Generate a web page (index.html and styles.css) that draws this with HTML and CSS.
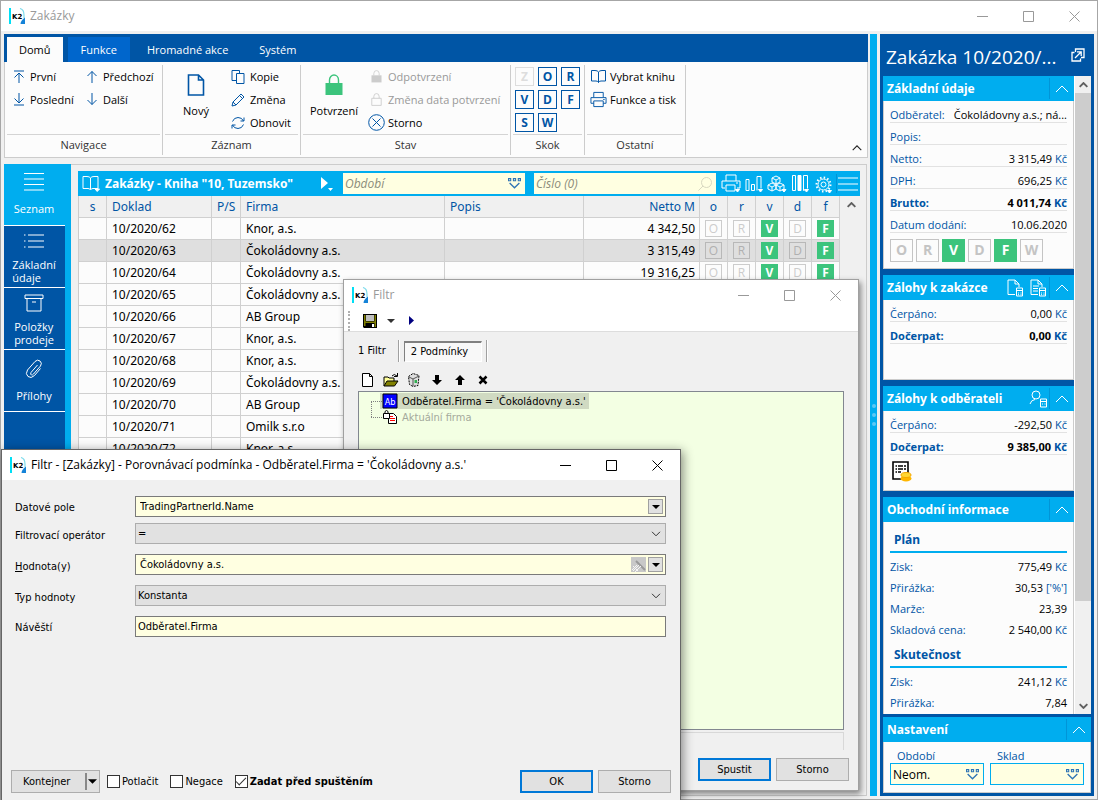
FILE: index.html
```html
<!DOCTYPE html>
<html lang="cs">
<head>
<meta charset="utf-8">
<title>Zakázky</title>
<link rel="stylesheet" href="styles.css">
</head>
<body>
<svg class="defs" aria-hidden="true">
  <symbol id="logo" viewBox="0 0 17 17"><path d="M0 0h2v16H0z" fill="#00dff5"/><path d="M11 .5q4 1 4 6.500v3" fill="none" stroke="#7fdcec" stroke-width="1.200"/><path d="M16 9.500v6.500h-4.500q0-3.500 4.500-6.500z" fill="#1583d8"/><text x="3" y="10.500" class="logotext">K2</text></symbol>
  <symbol id="min" viewBox="0 0 11 11"><path d="M0 5.500h11"/></symbol>
  <symbol id="max" viewBox="0 0 11 11"><path d="M.5.5h10v10H.5z"/></symbol>
  <symbol id="close" viewBox="0 0 11 11"><path d="M.5.5l10 10M10.500.5l-10 10"/></symbol>
  <symbol id="up" viewBox="0 0 12 13"><path d="M6 13V1.500M1.500 6L6 1.500 10.500 6"/></symbol>
  <symbol id="down" viewBox="0 0 12 13"><path d="M6 0v11.500M1.500 7L6 11.500 10.500 7"/></symbol>
  <symbol id="first" viewBox="0 0 12 13"><path d="M1 1h10M6 13V3M1.500 7.500L6 3l4.500 4.500"/></symbol>
  <symbol id="last" viewBox="0 0 12 13"><path d="M1 12h10M6 0v10M1.500 5.500L6 10l4.500-4.500"/></symbol>
  <symbol id="page" viewBox="0 0 17 22"><path d="M1 1h10l5 5v15H1zM11 1v5h5" stroke-width="1.600"/></symbol>
  <symbol id="copy" viewBox="0 0 14 14"><path d="M5.500 3.500h7.500v10H5.500zM5 10.500H1V.5h7.500v3"/></symbol>
  <symbol id="pencil" viewBox="0 0 14 14"><path d="M1 13l1-4L10 1l3 3-8 8zM8.500 2.500l3 3M2 9l3 3"/></symbol>
  <symbol id="refresh" viewBox="0 0 14 14"><path d="M1.500 5.500q1.500-4 5.500-4t5.500 3.500M13 1.500V5H9.500M12.500 8.500q-1.500 4-5.500 4t-5.500-3.500M1 12.500V9h3.500"/></symbol>
  <symbol id="lock" viewBox="0 0 18 22"><path d="M4.500 9V6a4.500 5 0 0 1 9 0v3" fill="none" stroke="currentColor" stroke-width="1.400"/><path d="M.5 9h17v12H.5z" fill="currentColor" stroke="none"/></symbol>
  <symbol id="lock-o" viewBox="0 0 18 22"><path d="M4.500 9V6a4.500 5 0 0 1 9 0v3M1 9h16v12H1z" stroke-width="1.500"/></symbol>
  <symbol id="cancel" viewBox="0 0 17 17"><circle cx="8.500" cy="8.500" r="7.800"/><path d="M4.500 4.500l8 8M12.500 4.500l-8 8"/></symbol>
  <symbol id="book" viewBox="0 0 17 14"><path d="M8.500 2.500Q7.500 1 5 1H1.500v10.500H6q2 0 2.500 1.500.5-1.500 2.500-1.500h4.500V1H12Q9.500 1 8.500 2.500zM8.500 2.500V13"/></symbol>
  <symbol id="printer" viewBox="0 0 18 17"><path d="M4 6V1h10v5M4 12.500H1V6.500h16v6h-3M4 10h10v6H4zM14 8.500h1.500"/></symbol>
  <symbol id="chevron" viewBox="0 0 14 8"><path d="M1 7l6-6 6 6"/></symbol>
  <symbol id="vdown" viewBox="0 0 10 6"><path d="M1 .8l4 4 4-4"/></symbol>
  <symbol id="drop" viewBox="0 0 12 10"><path d="M.5 .5h2v2h-2zM5 .5h2v2H5zM9.500 .5h2v2h-2z"/><path d="M1.500 4.500L6 9l4.500-4.500" stroke-width="1.200"/></symbol>
  <symbol id="lines" viewBox="0 0 20 18"><path d="M0 .5h20M0 6h20M0 11.500h20M0 17h20"/></symbol>
  <symbol id="list" viewBox="0 0 20 14"><path d="M0 1h1.500M4 1h16M0 7h1.500M4 7h16M0 13h1.500M4 13h16"/></symbol>
  <symbol id="box" viewBox="0 0 20 18"><path d="M1 1h18v3.500H1zM3 4.500V17h14V4.500M8 8h4"/></symbol>
  <symbol id="clip" viewBox="0 0 18 20"><path d="M12.500 6L6 13.500q-1 2 .5 2.500 1 .3 2-1L15.500 7q2-3-.5-5t-5 .5L2.500 11q-2.500 4 .5 6.500t6.500-1L15.500 9.500"/></symbol>
  <symbol id="gear" viewBox="0 0 17 17"><circle cx="8.500" cy="8.500" r="5.500"/><circle cx="8.500" cy="8.500" r="2.500"/><circle cx="8.500" cy="8.500" r="7" stroke-dasharray="1.500 2.160" stroke-width="2"/></symbol>
  <symbol id="doccalc" viewBox="0 0 17 18"><path d="M8 15.500H1V1h7l4 4v3M8 1v4h4M9.500 9h6v8h-6zM9.500 11.500h6M11 14h1M13.500 14h1M11 15.700h1M13.500 15.700h1"/></symbol>
  <symbol id="tri" viewBox="0 0 8 4"><path d="M0 0h8L4 4z" fill="currentColor" stroke="none"/></symbol>
</svg>

<div class="window">
  <header class="titlebar inactive">
    <svg class="logo"><use href="#logo"/></svg><span class="caption">Zakázky</span>
    <div class="winbtns">
      <button aria-label="Minimalizovat"><svg><use href="#min"/></svg></button><button aria-label="Maximalizovat"><svg><use href="#max"/></svg></button><button aria-label="Zavřít"><svg><use href="#close"/></svg></button>
    </div>
  </header>

  <div class="shell">
    <div class="left">
      <nav class="tabs"><button class="active">Domů</button><button class="hover">Funkce</button><button>Hromadné akce</button><button>Systém</button></nav>
      <section class="ribbon">
        <div class="group g-nav">
          <div class="tools"><div class="stack w-nav">
            <button class="cmd"><svg class="i12"><use href="#first"/></svg>První</button>
            <button class="cmd"><svg class="i12"><use href="#last"/></svg>Poslední</button></div>
            <div class="stack">
            <button class="cmd"><svg class="i12"><use href="#up"/></svg>Předchozí</button>
            <button class="cmd"><svg class="i12"><use href="#down"/></svg>Další</button></div>
          </div><div class="gname">Navigace</div>
        </div>
        <div class="group g-rec">
          <div class="tools"><button class="big"><svg><use href="#page"/></svg>Nový</button>
            <div class="stack">
            <button class="cmd"><svg class="i14"><use href="#copy"/></svg>Kopie</button>
            <button class="cmd"><svg class="i14"><use href="#pencil"/></svg>Změna</button>
            <button class="cmd"><svg class="i14"><use href="#refresh"/></svg>Obnovit</button></div>
          </div><div class="gname">Záznam</div>
        </div>
        <div class="group g-state">
          <div class="tools"><button class="big green"><svg><use href="#lock"/></svg>Potvrzení</button>
            <div class="stack">
            <button class="cmd off" disabled><svg class="i17 small"><use href="#lock"/></svg>Odpotvrzení</button>
            <button class="cmd off" disabled><svg class="i17 small"><use href="#lock-o"/></svg>Změna data potvrzení</button>
            <button class="cmd"><svg class="i17"><use href="#cancel"/></svg>Storno</button></div>
          </div><div class="gname">Stav</div>
        </div>
        <div class="group g-jump">
          <div class="tools jump"><button disabled>Z</button><button>O</button><button>R</button><button>V</button><button>D</button><button>F</button><button>S</button><button>W</button></div>
          <div class="gname">Skok</div>
        </div>
        <div class="group g-other">
          <div class="tools"><div class="stack">
            <button class="cmd"><svg class="i17"><use href="#book"/></svg>Vybrat knihu</button>
            <button class="cmd"><svg class="i17"><use href="#printer"/></svg>Funkce a tisk</button></div>
          </div><div class="gname">Ostatní</div>
        </div>
        <button class="collapse" aria-label="Sbalit"><svg><use href="#chevron"/></svg></button>
      </section>

      <div class="work">
        <nav class="side">
          <button class="active"><svg><use href="#lines"/></svg><span>Seznam</span></button>
          <button><svg><use href="#list"/></svg><span>Základní<br>údaje</span></button>
          <button><svg><use href="#box"/></svg><span>Položky<br>prodeje</span></button>
          <button class="attach"><svg><use href="#clip"/></svg><span>Přílohy</span></button>
        </nav>
        <main class="content">
          <div class="gridbar">
            <button aria-label="Kniha"><svg class="i-book" viewBox="0 0 18 17"><path d="M8.500 3Q7.500 1.500 5 1.500H1v12h5q2 0 2.500 1.500.5-1.500 2.500-1.500h5v-12h-4Q9.500 1.500 8.500 3zM8.500 3v11"/><path d="M13 14h4.500L15.200 16.500z" fill="#fff"/></svg></button>
            <h1>Zakázky - Kniha "10, Tuzemsko"</h1>
            <button aria-label="Spustit"><svg class="i-play" viewBox="0 0 14 14"><path d="M1 0l7 6-7 6zM8 11h5l-2.500 3z" fill="#fff" stroke="none"/></svg></button>
            <div class="search"><input aria-label="Období" placeholder="Období"><svg class="drop"><use href="#drop"/></svg></div>
            <div class="search"><input aria-label="Číslo" placeholder="Číslo (0)"><svg class="lens" viewBox="0 0 14 14"><circle cx="8.500" cy="5.500" r="5"/><path d="M5 9l-4.500 4.500"/></svg></div>
            <div class="icons">
              <button aria-label="Tisk"><svg viewBox="0 0 20 19"><path d="M5 7V1h10v6M4 14H1V7h18v7h-3M5 11h9v6H5zM15 9h2"/><path d="M14.500 15.500h4L16.500 18z" fill="#fff"/></svg></button>
              <button aria-label="Graf"><svg viewBox="0 0 20 19"><path d="M2 5.500h3v11H2zM7.500 10.500h3v6h-3zM13 2.500h4v12"/><path d="M13 2.500v14"/><path d="M14.500 15.500h4L16.500 18z" fill="#fff"/></svg></button>
              <button aria-label="Analýza"><svg viewBox="0 0 20 19"><path d="M9 2l4 2v4L9 10 5 8V4zM5 4l4 2 4-2M9 6v4M5 9l4 2v4l-4 2-4-2v-4zM1 11l4 2 4-2M5 13v4M13 9l4 2v4l-4 2-4-2v-4zM9 11l4 2 4-2M13 13v4"/><path d="M15 15.500h4L17 18z" fill="#fff"/></svg></button>
              <button aria-label="Sloupce"><svg viewBox="0 0 20 19"><path d="M2.500 1.500h3v15h-3zM13.500 1.500h4v13M13.500 1.500v15h1"/><path d="M8 1.500h3v15H8z" fill="#fff"/><path d="M14.500 15.500h4L16.500 18z" fill="#fff"/></svg></button>
              <button aria-label="Nastavení"><svg class="gear" viewBox="0 0 17 17"><use href="#gear"/><path d="M12.500 14.500h4L14.500 17z" fill="#fff"/></svg></button>
              <button class="menu" aria-label="Nabídka"><svg viewBox="0 0 20 18"><path d="M0 3.500h20M0 9.500h20M0 15.500h20"/></svg></button>
            </div>
          </div>
          <div class="gridwrap">
          <table class="grid">
            <colgroup><col class="c28"><col class="c105"><col class="c29"><col class="c204"><col><col class="c116"><col class="c28"><col class="c28"><col class="c28"><col class="c28"><col class="c28"></colgroup>
            <thead><tr><th class="mid">s</th><th>Doklad</th><th>P/S</th><th>Firma</th><th>Popis</th><th class="num">Netto M</th><th class="mid">o</th><th class="mid">r</th><th class="mid">v</th><th class="mid">d</th><th class="mid">f</th></tr></thead>
            <tbody>
            <tr><td></td><td>10/2020/62</td><td></td><td>Knor, a.s.</td><td></td><td class="num">4 342,50</td><td class="mid"><i>O</i></td><td class="mid"><i>R</i></td><td class="mid"><i class="on">V</i></td><td class="mid"><i>D</i></td><td class="mid"><i class="on">F</i></td></tr>
            <tr class="sel"><td></td><td>10/2020/63</td><td></td><td>Čokoládovny a.s.</td><td></td><td class="num">3 315,49</td><td class="mid"><i>O</i></td><td class="mid"><i>R</i></td><td class="mid"><i class="on">V</i></td><td class="mid"><i>D</i></td><td class="mid"><i class="on">F</i></td></tr>
            <tr><td></td><td>10/2020/64</td><td></td><td>Čokoládovny a.s.</td><td></td><td class="num">19 316,25</td><td class="mid"><i>O</i></td><td class="mid"><i>R</i></td><td class="mid"><i class="on">V</i></td><td class="mid"><i>D</i></td><td class="mid"><i class="on">F</i></td></tr>
            <tr><td></td><td>10/2020/65</td><td></td><td>Čokoládovny a.s.</td><td></td><td></td><td></td><td></td><td></td><td></td><td></td></tr>
            <tr><td></td><td>10/2020/66</td><td></td><td>AB Group</td><td></td><td></td><td></td><td></td><td></td><td></td><td></td></tr>
            <tr><td></td><td>10/2020/67</td><td></td><td>Knor, a.s.</td><td></td><td></td><td></td><td></td><td></td><td></td><td></td></tr>
            <tr><td></td><td>10/2020/68</td><td></td><td>Knor, a.s.</td><td></td><td></td><td></td><td></td><td></td><td></td><td></td></tr>
            <tr><td></td><td>10/2020/69</td><td></td><td>Čokoládovny a.s.</td><td></td><td></td><td></td><td></td><td></td><td></td><td></td></tr>
            <tr><td></td><td>10/2020/70</td><td></td><td>AB Group</td><td></td><td></td><td></td><td></td><td></td><td></td><td></td></tr>
            <tr><td></td><td>10/2020/71</td><td></td><td>Omilk s.r.o</td><td></td><td></td><td></td><td></td><td></td><td></td><td></td></tr>
            <tr><td></td><td>10/2020/72</td><td></td><td>Knor, a.s.</td><td></td><td></td><td></td><td></td><td></td><td></td><td></td></tr>
            </tbody>
          </table>
          <div class="gridscroll"><svg class="arrow"><use href="#chevron"/></svg></div>
          </div>
        </main>
      </div>
    </div>

    <div class="splitter"><span></span><span></span><span></span></div>

    <aside class="panel">
      <div class="ptitle"><h2>Zakázka 10/2020/...</h2><button aria-label="Otevřít v okně"><svg viewBox="0 0 14 14"><path d="M4.500 4V1h8.500v8.500h-3M3.500 4.500H1V13h8.500v-2.500M4 10l6-6M6 3.800h4.200V8" stroke-width="1.300"/></svg></button></div>
      <div class="pscroll">
        <div class="cards">
          <section class="card">
            <h3>Základní údaje<button class="tog" aria-label="Sbalit"><svg><use href="#chevron"/></svg></button></h3>
            <div class="cbody lined">
              <dl><dt>Odběratel:</dt><dd>Čokoládovny a.s.; ná...</dd></dl>
              <dl><dt>Popis:</dt><dd></dd></dl>
              <dl><dt>Netto:</dt><dd>3 315,49 <u>Kč</u></dd></dl>
              <dl><dt>DPH:</dt><dd>696,25 <u>Kč</u></dd></dl>
              <dl class="b"><dt>Brutto:</dt><dd>4 011,74 <u>Kč</u></dd></dl>
              <dl><dt>Datum dodání:</dt><dd>10.06.2020</dd></dl>
              <div class="badges"><i>O</i><i>R</i><i class="on">V</i><i>D</i><i class="on">F</i><i>W</i></div>
            </div>
          </section>
          <section class="card">
            <h3>Zálohy k zakázce<button class="act" aria-label="Nová záloha"><svg><use href="#doccalc"/></svg></button><button class="act" aria-label="Záloha"><svg viewBox="0 0 17 18"><use href="#doccalc"/><path d="M3 7h6M3 9.500h5M3 12h5"/></svg></button><button class="tog" aria-label="Sbalit"><svg><use href="#chevron"/></svg></button></h3>
            <div class="cbody lined h80">
              <dl><dt>Čerpáno:</dt><dd>0,00 <u>Kč</u></dd></dl>
              <dl class="b"><dt>Dočerpat:</dt><dd>0,00 <u>Kč</u></dd></dl>
            </div>
          </section>
          <section class="card">
            <h3>Zálohy k odběrateli<button class="act" aria-label="Odběratel"><svg viewBox="0 0 17 18"><circle cx="6" cy="5" r="4"/><path d="M0 14q1-4 5-4.500M10.500 9h6v8h-6zM10.500 11.500h6M12 14h1M14.500 14h1"/></svg></button><button class="tog" aria-label="Sbalit"><svg><use href="#chevron"/></svg></button></h3>
            <div class="cbody lined h80">
              <dl><dt>Čerpáno:</dt><dd>-292,50 <u>Kč</u></dd></dl>
              <dl class="b"><dt>Dočerpat:</dt><dd>9 385,00 <u>Kč</u></dd></dl>
              <svg class="coins" viewBox="0 0 20 21"><path d="M1 1h15v17H1z" fill="#fff" stroke="#000" stroke-width="1.600"/><path d="M3.500 5h1.500M6 5h5M12 5h2M3.500 8h1.500M6 8h5M12 8h2M3.500 11h1.500M6 11h3" stroke="#000" stroke-width="1.300"/><ellipse cx="14" cy="17.500" rx="5.500" ry="3" fill="#ffb600"/><ellipse cx="14" cy="14" rx="5" ry="2.500" fill="#ffd633" stroke="#f5a800"/></svg>
            </div>
          </section>
          <section class="card last">
            <h3>Obchodní informace<button class="tog" aria-label="Sbalit"><svg><use href="#chevron"/></svg></button></h3>
            <div class="cbody plain">
              <h4>Plán</h4>
              <dl><dt>Zisk:</dt><dd>775,49 <u>Kč</u></dd></dl>
              <dl><dt>Přirážka:</dt><dd>30,53 <u>['%']</u></dd></dl>
              <dl><dt>Marže:</dt><dd>23,39</dd></dl>
              <dl><dt>Skladová cena:</dt><dd>2 540,00 <u>Kč</u></dd></dl>
              <h4>Skutečnost</h4>
              <dl><dt>Zisk:</dt><dd>241,12 <u>Kč</u></dd></dl>
              <dl><dt>Přirážka:</dt><dd>7,84</dd></dl>
            </div>
          </section>
        </div>
        <div class="scrollbar"><svg class="arrow"><use href="#chevron"/></svg><span class="thumb"></span><svg class="arrow dn"><use href="#chevron"/></svg></div>
      </div>
      <section class="card settings">
        <h3>Nastavení<button class="tog" aria-label="Sbalit"><svg><use href="#chevron"/></svg></button></h3>
        <div class="cbody fields">
          <label><span>Období</span><span class="pick"><input value="Neom."><svg class="drop"><use href="#drop"/></svg></span></label>
          <label><span>Sklad</span><span class="pick"><input><svg class="drop"><use href="#drop"/></svg></span></label>
        </div>
      </section>
    </aside>
  </div>
</div>

<section class="dialog filter">
  <header class="titlebar inactive">
    <svg class="logo"><use href="#logo"/></svg><span class="caption">Filtr</span>
    <div class="winbtns">
      <button aria-label="Minimalizovat"><svg><use href="#min"/></svg></button><button aria-label="Maximalizovat"><svg><use href="#max"/></svg></button><button aria-label="Zavřít"><svg><use href="#close"/></svg></button>
    </div>
  </header>
  <div class="ftools">
    <span class="grip"></span>
    <button aria-label="Uložit"><svg class="save" viewBox="0 0 14 14"><path d="M0 0h14v14H1l-1-1z" fill="#000"/><path d="M1 1h1.500v11H1zM11.500 1H13v12h-1.500zM2.500 7.500h9V9h-9z" fill="#808000"/><path d="M3 1h8v6H3z" fill="#c0c0c0"/><path d="M9 10h2v3H9z" fill="#fff"/></svg></button>
    <button aria-label="Možnosti uložení"><svg class="tri"><use href="#tri"/></svg></button>
    <button aria-label="Spustit filtr"><svg class="run" viewBox="0 0 5 9"><path d="M0 0l5 4.500L0 9z" fill="#000080"/></svg></button>
  </div>
  <div class="ftabs"><button>1 Filtr</button><span class="vbar"></span><button class="down">2 Podmínky</button><span class="vbar"></span></div>
  <div class="factions">
    <button aria-label="Nový"><svg viewBox="0 0 16 14"><path d="M2.500.5h7l3 3v10h-10zM9.500.5v3h3" fill="#fff" stroke="#000"/></svg></button>
    <button aria-label="Otevřít"><svg viewBox="0 0 16 14"><path d="M1 13V4h4l1 1h5v3" fill="#ffff99" stroke="#000"/><path d="M1 13l3-5h11l-3.500 5z" fill="#808000" stroke="#000"/><path d="M9 3q2-3 5 0M14.500 0v3.500H11" fill="none" stroke="#000"/></svg></button>
    <button aria-label="Smazat"><svg viewBox="0 0 16 14"><path d="M2.500 3.500L7 .5l6 2-1 10-5 1-3.500-2z" fill="#ddd" stroke="#000" stroke-dasharray="2 1"/><path d="M3 4l4 2 6-3M7 6v7" stroke="#555" fill="none"/><path d="M8.500 7h2.500v3H8.500z" fill="#30b050"/></svg></button>
    <button aria-label="Dolů"><svg viewBox="0 0 16 14"><path d="M6 2h4v5h3l-5 5-5-5h3z" fill="#000"/></svg></button>
    <button aria-label="Nahoru"><svg viewBox="0 0 16 14"><path d="M6 12h4V7h3L8 2 3 7h3z" fill="#000"/></svg></button>
    <button aria-label="Odebrat"><svg viewBox="0 0 16 14"><path d="M4.500 3.500l7 7M11.500 3.500l-7 7" stroke="#000" stroke-width="2.500"/></svg></button>
  </div>
  <ul class="tree">
    <li class="picked"><svg class="node" viewBox="0 0 14 14"><path d="M0 0h14v14H0z" fill="#0000ff" stroke="#000"/><text x="7" y="10.500" text-anchor="middle" class="nodetext">Ab</text></svg><span>Odběratel.Firma = 'Čokoládovny a.s.'</span></li>
    <li class="dim"><svg class="node" viewBox="0 0 14 14"><path d="M5.500 3.500h5l3 3v7h-8z" fill="#fff" stroke="#000"/><path d="M7 6.500h3M7 8.500h5M7 10.500h5" stroke="#f00"/><path d="M.5 3.500h6v5h-6zM2 3.500V1.500l1.500-1 1.500 1v2" fill="#fff" stroke="#000"/></svg><span>Aktuální firma</span></li>
  </ul>
  <div class="status"></div>
  <footer class="fbtns"><button class="btn primary">Spustit</button><button class="btn">Storno</button></footer>
</section>

<section class="dialog cond">
  <header class="titlebar">
    <svg class="logo"><use href="#logo"/></svg><span class="caption">Filtr - [Zakázky] - Porovnávací podmínka - Odběratel.Firma = 'Čokoládovny a.s.'</span>
    <div class="winbtns">
      <button aria-label="Minimalizovat"><svg><use href="#min"/></svg></button><button aria-label="Maximalizovat"><svg><use href="#max"/></svg></button><button aria-label="Zavřít"><svg><use href="#close"/></svg></button>
    </div>
  </header>
  <form class="form">
    <div class="row"><label for="f1">Datové pole</label><div class="box"><input id="f1" value="TradingPartnerId.Name"><button type="button" aria-label="Vybrat pole"><svg class="tri"><use href="#tri"/></svg></button></div></div>
    <div class="row low tight"><label for="f2">Filtrovací operátor</label><div class="box gray"><select id="f2"><option>=</option></select><svg class="vd"><use href="#vdown"/></svg></div></div>
    <div class="row low"><label for="f3"><span class="key">H</span>odnota(y)</label><div class="box"><input id="f3" value="Čokoládovny a.s."><button type="button" class="tool" aria-label="Upravit" disabled><svg viewBox="0 0 15 15"><path d="M5 4l9 9" stroke="#999" stroke-width="2"/><path d="M1 13l5-5M2 14l6-6M4 15l6-6M2 9l5 5" stroke="#f5f5f5"/></svg></button><button type="button" aria-label="Vybrat hodnotu"><svg class="tri"><use href="#tri"/></svg></button></div></div>
    <div class="row low"><label for="f4">Typ hodnoty</label><div class="box gray"><select id="f4"><option>Konstanta</option></select><svg class="vd"><use href="#vdown"/></svg></div></div>
    <div class="row"><label for="f5">Návěští</label><div class="box text"><input id="f5" value="Odběratel.Firma"></div></div>
  </form>
  <footer class="cbtns">
    <button class="btn split"><span>Kontejner</span><svg class="tri"><use href="#tri"/></svg></button>
    <label class="chk"><input type="checkbox">Potlačit</label>
    <label class="chk"><input type="checkbox">Negace</label>
    <label class="chk bold"><input type="checkbox" checked>Zadat před spuštěním</label>
    <span class="grow"></span>
    <button class="btn primary">OK</button><button class="btn">Storno</button>
  </footer>
</section>
</body>
</html>
```

FILE: styles.css
```css
* { box-sizing: border-box; }
body { margin: 0; font: 12px/16px "Open Sans", "Noto Sans", sans-serif; color: #000; overflow: hidden; }
button { font: inherit; color: inherit; background: none; border: 0; padding: 0; }
input, select { font: inherit; color: inherit; }
h1, h2, h3, h4, dl, dd, ul { margin: 0; padding: 0; }
svg { display: block; flex: none; fill: none; stroke: currentColor; stroke-width: 1; overflow: visible; }
.defs { position: absolute; width: 0; height: 0; }
.logotext { font: 700 7px "DejaVu Sans", sans-serif; fill: #000; stroke: none; }

.window { height: 100vh; display: flex; flex-direction: column; background: #f0f0f0; border: 1px solid #a6a6a6; padding-bottom: 3px; }
.titlebar { height: 30px; flex: none; background: #fff; display: flex; align-items: center; padding-left: 8px; }
.titlebar .logo { width: 17px; height: 17px; stroke: none; }
.titlebar .caption { margin-left: 4px; }
.inactive { color: #999; }
.winbtns { margin-left: auto; display: flex; }
.winbtns button { width: 46px; height: 28px; display: flex; align-items: center; justify-content: center; }
.winbtns svg { width: 11px; height: 11px; }

.shell { flex: 1; min-height: 0; display: flex; margin-top: 3px; padding: 0 3px; }
.left { flex: 1; min-width: 0; display: flex; flex-direction: column; }
.tabs { height: 28px; flex: none; background: #0055a5; color: #fff; display: flex; padding: 3px 3px 0; font-size: 11px; }
.tabs button { padding: 0 14px 0 17px; }
.tabs button.active { background: #fcfcfc; color: #000; padding: 0 12px; margin-right: 5px; }
.tabs button.hover { background: #0066cc; padding: 0 13px; }
.ribbon { height: 96px; flex: none; background: #fcfcfc; border: solid #ccc; border-width: 0 1px 1px; display: flex; padding: 3px 0 2px; position: relative; font-size: 11px; }
.group { border-right: 1px solid #ccc; display: flex; flex-direction: column; padding: 0 2px; }
.tools { flex: 1; display: flex; }
.gname { height: 21px; border-top: 1px solid #d4d4d4; text-align: center; line-height: 20px; color: #333; }
.g-nav { width: 158px; }
.g-rec { width: 138px; }
.g-state { width: 210px; }
.g-jump { width: 74px; }
.g-other { width: 101px; }
.g-nav .tools { padding-left: 6px; }
.w-nav { width: 73px; }
.stack { display: flex; flex-direction: column; }
.cmd { height: 23px; display: flex; align-items: center; gap: 5px; white-space: nowrap; color: #000; }
.cmd svg { color: #0055a5; }
.cmd.off { color: #999; }
.cmd.off svg { color: #ccc; }
.i12 { width: 12px; height: 13px; }
.i14 { width: 14px; height: 14px; }
.i17 { width: 17px; height: 17px; }
.i17.small { height: 13px; }
.g-state .cmd, .g-other .cmd { gap: 3px; }
.g-other .tools { padding-left: 3px; }
.big { width: 62px; margin-right: 4px; display: flex; flex-direction: column; align-items: center; padding-top: 9px; gap: 7px; }
.green { margin-right: 3px; }
.big svg { width: 18px; height: 22px; color: #0055a5; }
.big.green svg { color: #3cc47c; }
.jump { display: grid; grid-template-columns: repeat(3, 19px); grid-auto-rows: 19px; gap: 4px; padding: 2px; }
.jump button { border: 1px solid #0055a5; color: #0055a5; font-weight: 700; font-size: 12px; line-height: 16px; }
.jump button:disabled { border-color: #ddd; color: #ddd; }
.collapse { position: absolute; right: 5px; bottom: 6px; }
.collapse svg { width: 10px; height: 6px; color: #222; stroke-width: 1.500; }

.work { flex: 1; min-height: 0; display: flex; margin-top: 6px; }
.side { width: 67px; flex: none; background: #0055a5; border-right: 6px solid #00adef; color: #fff; font-size: 11px; }
.side button { width: 100%; height: 62px; border-bottom: 1px solid #fff; display: flex; flex-direction: column; align-items: center; padding: 6px 1px 0 0; gap: 8px; line-height: 13px; text-align: left; }
.side button.active { background: #00adef; padding-top: 9px; gap: 11px; }
.side button.attach { padding-top: 9px; gap: 10px; }
.side svg { width: 20px; height: 18px; }
.side .attach svg { height: 20px; }
.content { flex: 1; min-width: 0; border: solid #ccc; border-width: 1px 1px 1px 0; margin-right: 1px; padding: 6px 6px 0 7px; overflow: hidden; }
.gridbar { height: 25px; background: #00adef; color: #fff; display: flex; align-items: center; padding: 0 2px 0 4px; }
.i-book { width: 18px; height: 17px; }
.gridbar h1 { font: 700 12px/16px "Noto Sans", sans-serif; margin-left: 5px; white-space: nowrap; flex: 1; }
.i-play { width: 14px; height: 14px; margin-right: 9px; }
.search { width: 182px; height: 21px; background: #ffffe1; display: flex; align-items: center; padding-right: 4px; margin-right: 9px; }
.search + .search { margin-right: 5px; }
.search input { flex: 1; min-width: 0; border: 0; background: none; padding: 0 2px; font-style: italic; }
.search input::placeholder { color: #8c8c7a; }
.drop { width: 13px; height: 11px; color: #2f74b5; }
.lens { width: 14px; height: 14px; color: #d8d8c0; }
.icons { display: flex; gap: 3px; }
.icons svg { width: 20px; height: 19px; }
.icons svg.gear { width: 17px; height: 17px; margin: 1px 3px 0 2px; }
.icons .menu { border-left: 1px solid #0095d8; padding-left: 1px; margin-left: -2px; }
.gridwrap { display: flex; }
.grid { flex: 1; table-layout: fixed; border-spacing: 0; border-left: 1px solid #ccc; min-width: 0; width: 0; font-family: "Noto Sans", sans-serif; }
.c28 { width: 28px; } .c29 { width: 29px; } .c105 { width: 105px; } .c116 { width: 116px; } .c204 { width: 204px; }
.grid th, .grid td { height: 22px; padding: 1px 4px 0 5px; border: solid #d0d0d0; border-width: 0 1px 1px 0; text-align: left; font-weight: 400; white-space: nowrap; line-height: 18px; overflow: hidden; }
.grid th { background: #f0f0f0; color: #0055a5; }
.grid td { background: #fcfcfc; font-size: 12px; }
.grid .sel td { background: #dfdfdf; }
.grid .num { text-align: right; }
.grid .mid { text-align: center; padding: 0; }
.grid i { display: block; width: 17px; height: 17px; margin: 0 auto; border: 1px solid #ccc; color: #ccc; font: 12px/15px "Open Sans", sans-serif; }
.grid .sel i { border-color: #b8b8b8; color: #b0b0b0; }
.grid i.on, .grid .sel i.on { background: #3cc47c; border-color: #3cc47c; color: #fff; font-weight: 700; }
.gridscroll { width: 20px; padding-left: 3px; color: #555; }
.arrow { width: 9px; height: 6px; margin: 6px auto; stroke-width: 3; color: #606060; }
.arrow.dn { transform: rotate(180deg); }

.splitter { width: 7px; flex: none; margin: 0 3px 0 2px; background: #00adef; display: flex; flex-direction: column; align-items: center; justify-content: center; gap: 5px; }
.splitter span { width: 4px; height: 4px; border-radius: 2px; background: #5cc8f5; }
.panel { width: 214px; flex: none; background: #0055a5; padding: 0 3px 3px; display: flex; flex-direction: column; }
.ptitle { height: 42px; flex: none; display: flex; align-items: center; justify-content: space-between; color: #fff; padding: 3px 6px 0 3px; }
.ptitle h2 { font-size: 19px; line-height: 26px; font-weight: 400; white-space: nowrap; }
.ptitle svg { width: 14px; height: 14px; margin-bottom: 4px; }
.pscroll { flex: 1; min-height: 0; display: flex; overflow: hidden; }
.cards { flex: 1; min-width: 0; display: flex; flex-direction: column; gap: 6px; overflow: hidden; }
.card { flex: none; }
.card h3 { height: 25px; background: #00adef; color: #fff; font: 700 12px/16px "Noto Sans", sans-serif; display: flex; align-items: center; padding-left: 4px; white-space: nowrap; }
.tog { margin-left: auto; border-left: 1px solid #0095d8; height: 21px; width: 25px; display: flex; align-items: center; justify-content: center; }
.tog svg { width: 14px; height: 8px; }
.act svg { width: 17px; height: 18px; }
.act { margin-left: auto; margin-right: 2px; }
.act + .act { margin-left: 4px; }
.act + .tog { margin-left: 0; }
.cbody { background: #fcfcfc; border: solid #ccc; border-width: 0 1px 1px; padding: 0 6px; font-size: 11px; }
.cbody dl { display: flex; justify-content: space-between; height: 22px; line-height: 27px; white-space: nowrap; color: #000; }
.lined dl { border-bottom: 1px solid #e2e2e2; }
.cbody dt, .cbody u { color: #0055a5; text-decoration: none; }
.cbody .b { font: 700 11px/27px "Noto Sans", sans-serif; }
.h80 { min-height: 80px; }
.badges { display: flex; gap: 3px; padding: 6px 0; }
.badges i { width: 23px; height: 23px; border: 1px solid #c4c4c4; color: #c4c4c4; font: 700 14px/20px "Open Sans", sans-serif; text-align: center; }
.badges i.on { background: #3cc47c; border-color: #3cc47c; color: #fff; }
.coins { width: 20px; height: 21px; margin: 6px 0 0 2px; stroke: none; }
.plain { padding-top: 4px; }
.plain h4 { height: 27px; font: 700 12px/28px "Noto Sans", sans-serif; color: #0055a5; border-bottom: 2px solid #00adef; padding-left: 4px; margin-bottom: 4px; }
.plain dl { height: 21px; line-height: 20px; }
.scrollbar { width: 17px; flex: none; background: #f0f0f0; border-left: 1px solid #fff; display: flex; flex-direction: column; }
.scrollbar .arrow { flex: none; margin: 6px auto 5px; }
.thumb { flex: 5; background: #cdcdcd; }
.scrollbar .dn { margin-top: auto; }
.scrollbar::after { content: ""; order: 1; flex: 1; }
.scrollbar .dn { order: 2; }
.settings { margin-top: 3px; }
.fields { display: flex; gap: 6px; padding: 6px 6px 7px; height: 51px; }
.fields label { flex: 1; min-width: 0; display: flex; flex-direction: column; color: #0055a5; font-size: 11px; line-height: 15px; }
.fields label > span:first-child { padding-left: 7px; }
.pick { height: 23px; border: 1px solid #00adef; background: #ffffe1; color: #000; display: flex; align-items: center; padding-right: 4px; font-size: 12px; }
.pick input { flex: 1; min-width: 0; width: 0; border: 0; background: none; padding: 0 2px; }

.dialog { position: absolute; display: flex; flex-direction: column; background: #f0f0f0; border: 1px solid #a0a0a0; font: 11px/14px "DejaVu Sans Condensed", "DejaVu Sans", sans-serif; }
.dialog .titlebar { font: 12px/16px "Open Sans", sans-serif; }
.filter { left: 343px; top: 279px; width: 516px; height: 512px; box-shadow: 2px 3px 6px rgba(0,0,0,.45); }
.ftools { height: 22px; background: #fff; border-bottom: 1px solid #ddd; display: flex; align-items: center; padding-left: 4px; }
.grip { width: 2px; height: 20px; border-left: 2px dotted #b0b0b0; margin-right: 13px; }
.save { width: 14px; height: 14px; stroke: none; }
.tri { width: 8px; height: 4px; }
.ftools .tri { margin: 0 12px 0 10px; color: #333; }
.run { width: 5px; height: 9px; stroke: none; margin-left: 2px; }
.ftabs { display: flex; align-items: center; padding: 8px 0 0 14px; }
.ftabs .vbar { width: 2px; height: 22px; background: #a0a0a0; border-right: 1px solid #fff; margin: 0 4px 0 12px; }
.ftabs .down { height: 21px; width: 78px; border: 1px solid #808080; border-top-width: 2px; border-right-color: #fff; border-bottom-color: #fff; background: #f8f8f8; text-align: left; padding-left: 6px; }
.ftabs .down + .vbar { margin-left: 4px; }
.factions { display: flex; gap: 7px; padding: 11px 15px 4px 16px; }
.factions svg { width: 16px; height: 14px; stroke: none; }
.tree { flex: 1; list-style: none; background: #f3ffe3; border: 1px solid #828790; margin: 0 14px 0 14px; padding: 1px 0 0 12px; }
.tree li { height: 16px; width: max-content; display: flex; align-items: center; padding-right: 3px; margin-left: 9px; position: relative; gap: 5px; padding-left: 3px; }
.tree li span { padding-top: 1px; }
.tree li::before { content: ""; position: absolute; left: -9px; top: 8px; width: 11px; border-top: 1px dotted #808080; }
.tree li.dim::after { content: ""; position: absolute; left: -9px; top: -8px; height: 16px; border-left: 1px dotted #808080; }
.tree .picked { background: #d0dac2; }
.tree .dim { color: #a4a99c; }
.node { width: 14px; height: 14px; }
.nodetext { fill: #fff; stroke: none; font-size: 9px; }
.status { height: 18px; margin: 2px 14px 0 13px; border: solid #d8d8d8; border-width: 1px 1px 0 0; }
.fbtns { display: flex; justify-content: flex-end; gap: 5px; padding: 8px 9px 9px; }
.btn { width: 73px; height: 23px; background: #e1e1e1; border: 1px solid #adadad; }
.btn.primary { border: 2px solid #0078d7; }

.cond { left: 1px; top: 449px; width: 680px; height: 352px; border-color: #666; box-shadow: 2px 2px 10px rgba(0,0,0,.45); }
.form { flex: 1; padding: 16px 14px 0 13px; display: flex; flex-direction: column; gap: 10px; }
.row { display: flex; align-items: center; }
.row.tight { margin-top: -4px; }
.row label { width: 120px; flex: none; padding-top: 2px; }
.row.low label { padding-top: 5px; }
.key { text-decoration: underline; }
.box { flex: 1; min-width: 0; height: 21px; border: 1px solid #7a7a7a; background: #ffffe1; display: flex; align-items: center; gap: 2px; padding-right: 2px; position: relative; }
.box input, .box select { flex: 1; min-width: 0; border: 0; background: none; padding: 0 4px; appearance: none; }
.box.text input { padding: 0 2px; }
.box.gray { background: #e1e1e1; border-color: #adadad; }
.box.gray select { padding: 0 2px; }
.box button { width: 15px; height: 15px; border: 1px solid #a0a0a0; background: #e1e1e1; display: flex; align-items: center; justify-content: center; }
.box button.tool { background: #c8c8c8; border: 0; }
.tool svg { width: 15px; height: 15px; }
.vd { position: absolute; right: 4px; top: 7px; width: 10px; height: 6px; color: #333; }
.cbtns { display: flex; align-items: center; padding: 0 9px 7px; }
.cbtns .btn + .btn { margin-left: 5px; }
.split { width: 89px; display: flex; align-items: center; justify-content: space-between; padding: 0 2px 0 11px; margin-right: 7px; }
.split .tri { width: 9px; height: 5px; }
.split span { border-right: 2px solid #888; line-height: 17px; flex: 1; text-align: left; margin-right: 1px; }
.chk { display: flex; align-items: center; gap: 2px; margin-right: 12px; }
.chk input { appearance: none; width: 13px; height: 13px; margin: 0; border: 1px solid #333; background: #fff; display: grid; place-items: center; }
.chk input:checked::after { content: ""; width: 9px; height: 4px; border: solid #333; border-width: 0 0 1px 1px; transform: rotate(-45deg) translate(1px, -1px); }
.bold { font-weight: 700; }
.grow { flex: 1; }
```
